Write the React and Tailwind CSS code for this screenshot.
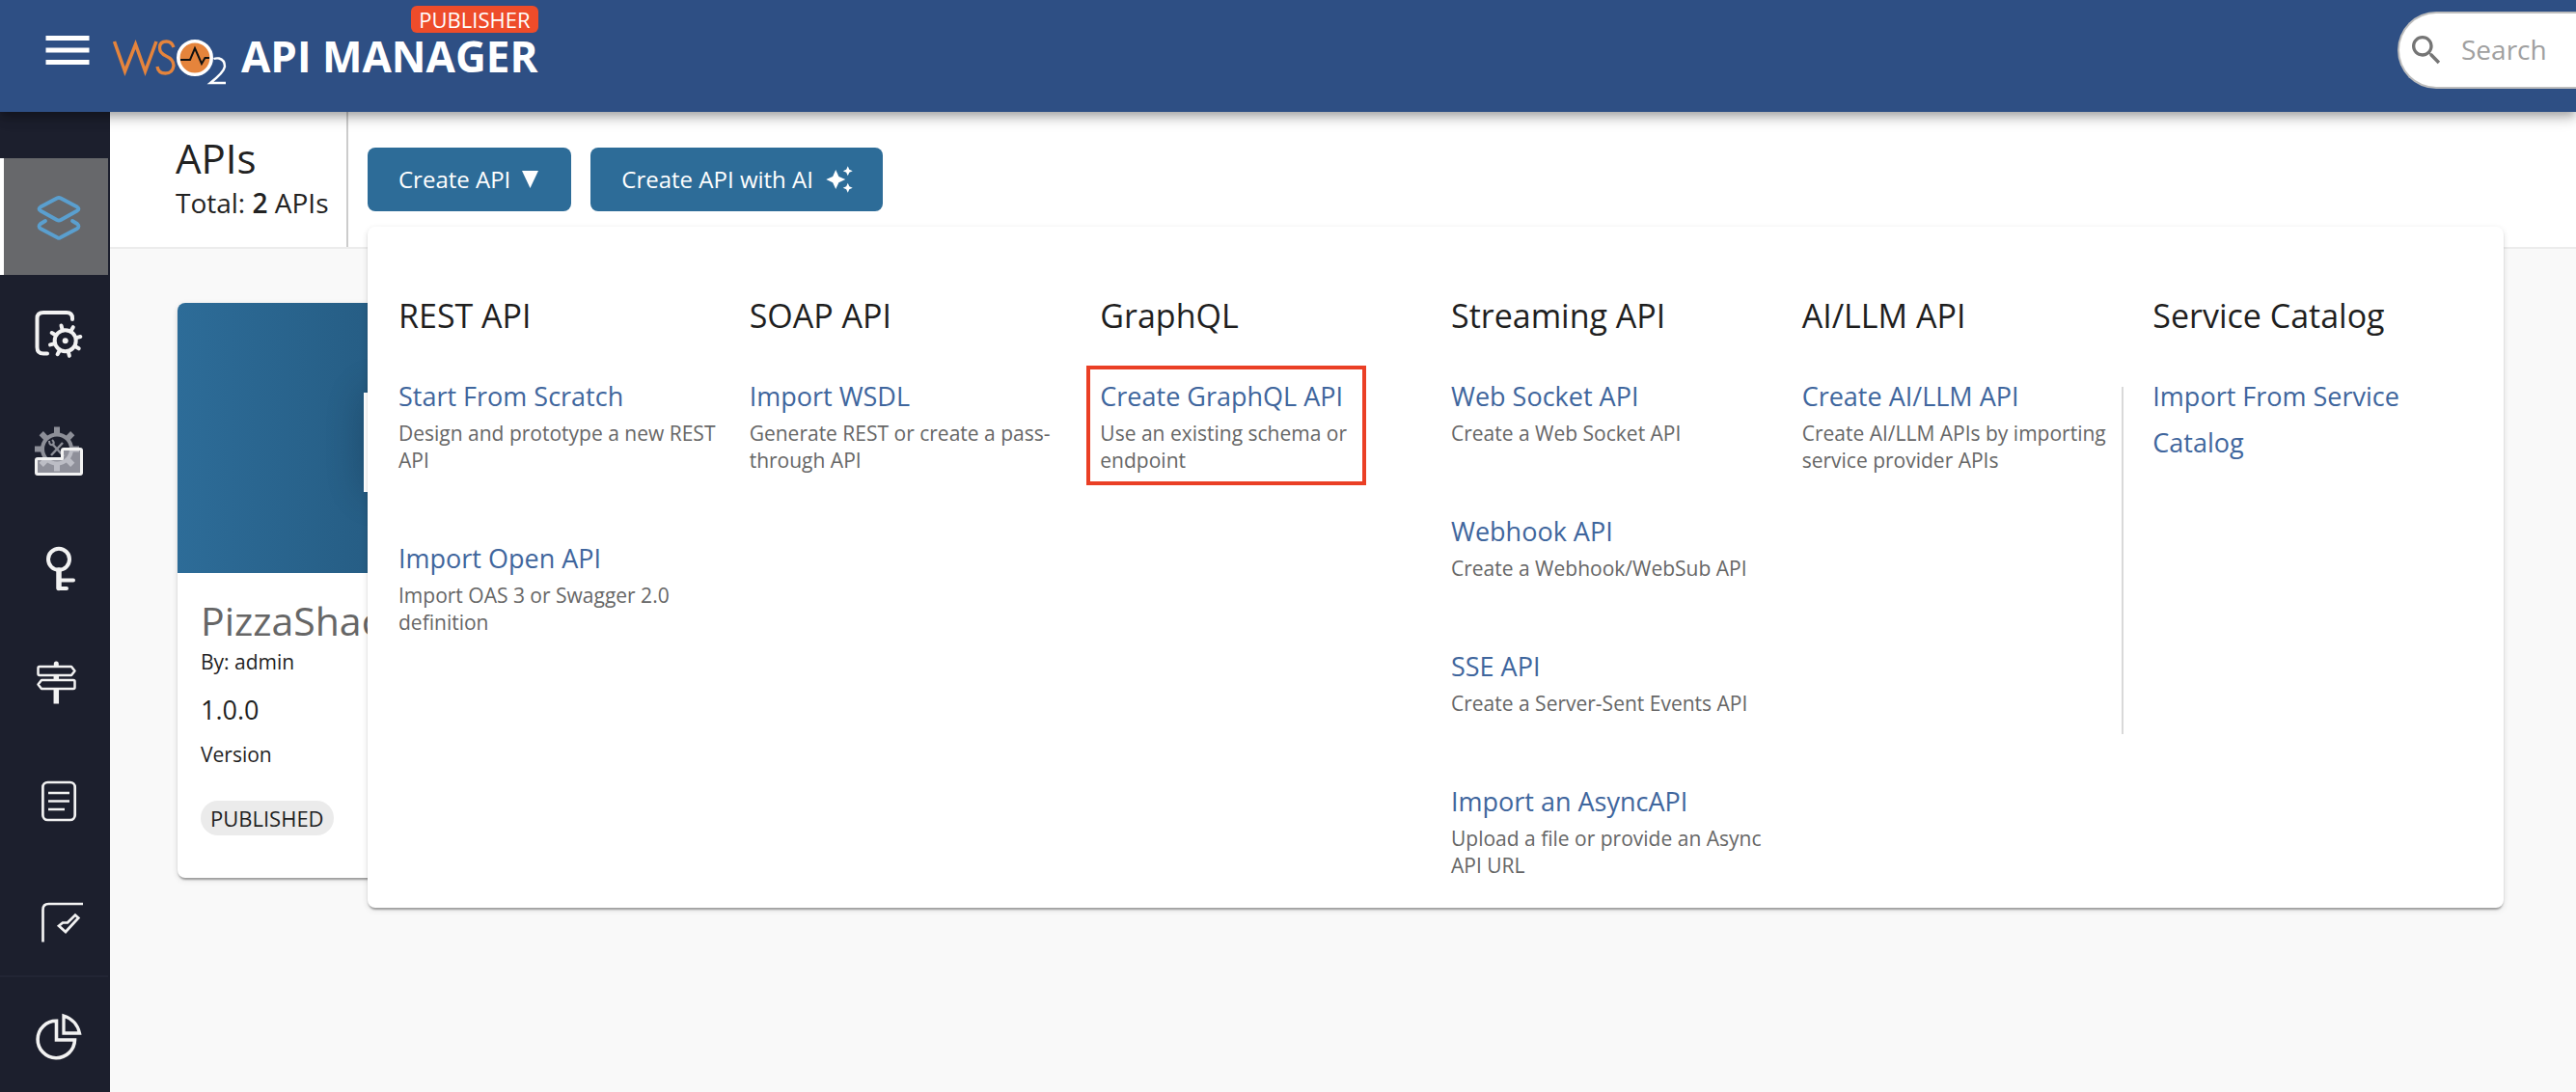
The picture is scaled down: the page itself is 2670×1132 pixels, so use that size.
import React from "react";

const columns = [
  { title: "REST API", items: [
    ["Start From Scratch", "Design and prototype a new REST API"],
    ["Import Open API", "Import OAS 3 or Swagger 2.0 definition"],
  ] },
  { title: "SOAP API", items: [["Import WSDL", "Generate REST or create a pass-through API"]] },
  { title: "GraphQL", items: [["Create GraphQL API", "Use an existing schema or endpoint", true]] },
  { title: "Streaming API", items: [
    ["Web Socket API", "Create a Web Socket API"],
    ["Webhook API", "Create a Webhook/WebSub API"],
    ["SSE API", "Create a Server-Sent Events API"],
    ["Import an AsyncAPI", "Upload a file or provide an Async API URL"],
  ] },
  { title: "AI/LLM API", items: [["Create AI/LLM API", "Create AI/LLM APIs by importing service provider APIs"]] },
  { title: "Service Catalog", divided: true, items: [["Import From Service Catalog", ""]] },
];

const Icon = ({ children }) => (
  <svg viewBox="0 0 56 56" className="h-14 w-14" fill="none" stroke="#f2f2f2" strokeWidth="4" aria-hidden="true">{children}</svg>
);

const gearTeeth = [0, 45, 90, 135, 180, 225, 270, 315];

const LayersIcon = () => (
  <Icon>
    <g stroke="#5a9fcf" strokeWidth="3.8" strokeLinejoin="round" strokeLinecap="round">
      <path d="M26 8.5 L9 17.5 Q6 19.500 9 21.500 L26 31 Q28 32 30 31 L47 21.500 Q50 19.500 47 17.500 L30 8.5 Q28 7.5 26 8.5 Z" />
      <path d="M14 32 L9 35 Q6 37.5 9 40 L26 49 Q28 50.500 30 49 L47 40 Q50 37.5 47 35 L42 32" />
    </g>
  </Icon>
);

const ServicesIcon = () => (
  <Icon>
    <path d="M42 13 V12 Q42 6 36 6 H12 Q5.500 6 5.500 12 V42 Q5.500 48.500 12 48.500 H16" strokeLinecap="round" />
    <circle cx="34.700" cy="35.200" r="11" />
    <circle cx="34.700" cy="35.200" r="3" fill="#f2f2f2" stroke="none" />
    {gearTeeth.map((a) => <path key={a} d="M34.700 23.500 V19" strokeLinecap="round" transform={`rotate(${a - 15} 34.7 35.2)`} />)}
  </Icon>
);

const PoliciesIcon = () => (
  <Icon>
    <g stroke="#8d8f98">
      <circle cx="26" cy="26.500" r="15" />
      {gearTeeth.map((a) => <path key={a} d="M26 11 V3.500" strokeWidth="6" transform={`rotate(${a} 26 26.5)`} />)}
      <path d="M21 21 L33 34 M32 20 L20 33" strokeWidth="2.500" />
      <path d="M18 18 Q18 23 22 22 Q24 20 21 17" strokeWidth="2" />
    </g>
    <path d="M6 36.500 H31.500 V28 Q31.500 26.500 33 26.500 H50 Q51.500 26.500 51.500 28 V51 Q51.500 52.500 50 52.500 H6 Q4.500 52.500 4.500 51 V38 Q4.500 36.500 6 36.500 Z" fill="#dcdce2" fillOpacity="0.600" strokeWidth="3" strokeLinejoin="round" />
  </Icon>
);

const KeyIcon = () => (
  <Icon>
    <circle cx="28" cy="19.800" r="11" />
    <path d="M28 31 V49.500" strokeWidth="5.500" strokeLinecap="round" />
    <path d="M28 41.500 H43 M28 50 H36" strokeLinecap="round" />
  </Icon>
);

const SignIcon = () => (
  <Icon>
    <path d="M25.300 7 V8.500" strokeWidth="5" strokeLinecap="round" />
    <path d="M25.300 19 V24 M25.300 33 V48.500" strokeWidth="5.500" />
    <path d="M8 10 H41 L44.500 14.500 L41 19 H8 Q6.500 19 6.500 17.500 V11.500 Q6.500 10 8 10 Z M43 24 H10 L6.500 28.500 L10 33 H43 Q44.500 33 44.500 31.500 V25.500 Q44.500 24 43 24 Z" strokeWidth="2.500" strokeLinejoin="round" />
  </Icon>
);

const DocIcon = () => (
  <Icon>
    <rect x="11.400" y="9" width="33.300" height="39" rx="5" strokeWidth="2.700" />
    <path d="M17 20 H39 M17 28.500 H39 M17 37 H34" strokeWidth="2.700" />
  </Icon>
);

const CheckIcon = () => (
  <Icon>
    <path d="M11.500 53.500 V20 Q11.500 14 17.500 14 H53" strokeWidth="2.700" />
    <path d="M28 36.800 L32 33.500 H37 L45 25.500 L48.300 28.500 L35 43 Z" strokeWidth="2.700" />
  </Icon>
);

const PieIcon = () => (
  <Icon>
    <path d="M25.500 13.300 A19.200 19.200 0 1 0 44.500 33 H25.500 Z" strokeWidth="3.600" />
    <path d="M33 8 V26 H49.500 Q46.500 12.500 33 8 Z" strokeWidth="3.300" />
  </Icon>
);

const navItems = [
  ["APIs", LayersIcon], ["Services", ServicesIcon], ["Policies", PoliciesIcon], ["Scopes", KeyIcon],
  ["Routing", SignIcon], ["Documents", DocIcon], ["Governance", CheckIcon], ["Analytics", PieIcon],
];

function Header() {
  return (
    <header className="relative z-20 flex h-[116px] items-start justify-between bg-[#2e4f84] shadow-[0_4px_8px_-2px_rgba(0,0,0,0.2),0_8px_10px_rgba(0,0,0,0.14),0_2px_20px_rgba(0,0,0,0.12)]">
      <div className="flex">
        <button type="button" aria-label="Open menu" className="mt-[22px] ml-10 h-[60px] w-[60px]">
          <svg viewBox="0 0 24 24" fill="#fff"><path d="M3 18h18v-2H3v2zm0-5h18v-2H3v2zm0-7v2h18V6H3z" /></svg>
        </button>
        <a href="#home" className="ml-4 flex pt-[6px]" aria-label="WSO2 API Manager Publisher">
          <svg viewBox="0 0 120 52" className="mt-8 h-[52px] w-[120px]" fill="none">
            <path d="M2.500 5 L13.500 36 L24.500 8 L34.500 36 L46 5" stroke="#e5843c" strokeWidth="3.500" />
            <path d="M64 11 Q62 5 56.500 5 Q49.500 5 49.500 11.500 Q49.500 17 56 20 Q64 23.500 64 30 Q63 38 55.500 38 Q48 38 47 31" stroke="#e5843c" strokeWidth="3.300" />
            <circle cx="86" cy="22" r="17.200" fill="#e5843c" stroke="#fff" strokeWidth="3.600" />
            <path d="M71 24 H81 L86 12 L93 28 L96.500 22 H101" stroke="#111" strokeWidth="2" />
            <path d="M105.500 23 Q108 22 111 22.500 Q117 24 117 31 Q116 37 102 48 H118" stroke="#fff" strokeWidth="2.400" />
          </svg>
          <span className="ml-[14px] flex flex-col items-end">
            <span className="rounded-md bg-[#ee4c2a] px-2 text-[22px] leading-7 text-white">PUBLISHER</span>
            <span className="text-[44px] leading-[48px] font-bold text-white">API MANAGER</span>
          </span>
        </a>
      </div>
      <label className="mt-3 flex h-20 w-[185px] items-center overflow-hidden rounded-l-full border-2 border-r-0 border-[#bdbdbd] bg-white">
        <svg viewBox="0 0 24 24" className="ml-2 h-10 w-10 shrink-0" fill="#757575" aria-hidden="true"><path d="M15.500 14h-.79l-.28-.27C15.410 12.590 16 11.110 16 9.500 16 5.910 13.090 3 9.500 3S3 5.910 3 9.500 5.910 16 9.500 16c1.610 0 3.090-.59 4.230-1.570l.27.28v.79l5 4.990L20.490 19l-4.990-5zm-6 0C7.010 14 5 11.990 5 9.500S7.010 5 9.500 5 14 7.010 14 9.500 11.990 14 9.500 14z" /></svg>
        <input aria-label="Search" placeholder="Search" className="ml-4 min-w-0 flex-1 pb-[2px] text-[28px] outline-none placeholder:text-[#a0a0a0]" />
      </label>
    </header>
  );
}

function Sidebar() {
  return (
    <nav className="flex w-[114px] shrink-0 flex-col bg-[#1c1f2d] pt-12">
      {navItems.map(([label, Glyph], i) => (
        <a key={label} href={"#" + label.toLowerCase()} aria-label={label}
          className={i === 0
            ? "mr-[2px] flex h-[121px] items-center border-l-4 border-white bg-[#67686b] pl-[29px]"
            : i === 7
              ? "mr-[2px] flex h-[121px] items-center border-t-2 border-[#222534] pl-[33px]"
              : "mr-[2px] flex h-[121px] items-center pl-[33px]"}>
          <Glyph />
        </a>
      ))}
    </nav>
  );
}

function ApiCard() {
  return (
    <article className="w-[432px] overflow-hidden rounded-lg bg-white shadow-[0_4px_2px_-2px_rgba(0,0,0,0.2),0_2px_2px_rgba(0,0,0,0.14),0_2px_6px_rgba(0,0,0,0.12)]">
      <div className="flex h-[280px] items-center justify-center bg-linear-to-r from-[#2d6c98] to-[#1e4d6f] pt-2">
        <div className="h-[103px] w-[46px] bg-white shadow-[0_0_40px_rgba(0,0,0,0.2)]" />
      </div>
      <div className="px-6 pb-11 text-[#1f1f1f]">
        <h2 className="truncate pt-5 text-[41px] leading-[58px] text-[#666]">PizzaShackAPI</h2>
        <p className="text-[21px] leading-7">By: admin</p>
        <p className="mt-4 text-[27px] leading-10">1.0.0</p>
        <p className="mt-3 text-[21px] leading-7">Version</p>
        <span className="mt-[34px] inline-block rounded-full bg-[#ebebeb] px-[10px] text-[22px] leading-9">PUBLISHED</span>
      </div>
    </article>
  );
}

function CreateMenu() {
  return (
    <section aria-label="Create API" className="absolute top-[119px] right-[75px] left-[267px] z-10 grid grid-cols-6 rounded-lg bg-white pt-16 pb-[30px] pl-8 shadow-[0_4px_2px_-2px_rgba(0,0,0,0.2),0_2px_2px_rgba(0,0,0,0.14),0_2px_6px_rgba(0,0,0,0.12)]">
      {columns.map(({ title, items, divided }) => (
        <div key={title}>
          <h3 className="text-[34px] leading-[56px] text-[#1f1f1f]">{title}</h3>
          <div className={divided ? "mt-[46px] -ml-8 flex h-[360px] flex-col border-l-2 border-[#d9d9d9] pl-[30px]" : "mt-[46px] flex flex-col"}>
            <ul className="-mt-[14px] flex flex-col gap-16">
              {items.map(([name, text, marked]) => (
                <li key={name} className="relative pr-8">
                  {marked && <span className="pointer-events-none absolute -top-2 -bottom-3 -left-[14px] w-[290px] border-4 border-[#ea3f25]" />}
                  <a href="#create" className="block text-[27px] leading-[48px] text-[#3f669d]">{name}</a>
                  {text && <p className="text-[21px] leading-7 text-[#666]">{text}</p>}
                </li>
              ))}
            </ul>
          </div>
        </div>
      ))}
    </section>
  );
}

export default function App() {
  return (
    <div className="flex min-h-screen flex-col overflow-x-hidden bg-[#f9f9f9] font-['Open_Sans',sans-serif]">
      <Header />
      <div className="flex flex-1">
        <Sidebar />
        <main className="relative min-w-0 flex-1">
          <div className="flex h-[142px] border-b-2 border-[#ececec] bg-white">
            <div className="w-[247px] shrink-0 border-r-2 border-[#ccc] pt-5 pl-[68px] text-[#222]">
              <h1 className="text-[42px] leading-[56px]">APIs</h1>
              <p className="text-[28px] leading-9">Total: <b className="font-semibold">2</b> APIs</p>
            </div>
            <div className="flex gap-5 pt-[37px] pl-5">
              <button type="button" className="flex h-[66px] items-center gap-3 rounded-lg bg-[#2d6c98] pr-[34px] pl-8 text-[24px] text-white">
                Create API
                <svg viewBox="0 0 17 18" className="h-[18px] w-[17px]" fill="#fff" aria-hidden="true"><path d="M0 0H17L8.500 18Z" /></svg>
              </button>
              <button type="button" className="flex h-[66px] items-center gap-3 rounded-lg bg-[#2d6c98] pr-[30px] pl-8 text-[24px] text-white">
                Create API with AI
                <svg viewBox="0 0 24 24" className="h-[30px] w-[30px]" fill="#fff" aria-hidden="true"><path d="m19 9 1.250-2.750L23 5l-2.750-1.250L19 1l-1.250 2.750L15 5l2.750 1.250L19 9zm-7.500.5L9 4 6.500 9.500 1 12l5.500 2.500L9 20l2.500-5.500L17 12l-5.500-2.500zM19 15l-1.250 2.750L15 19l2.750 1.250L19 23l1.250-2.750L23 19l-2.750-1.250L19 15z" /></svg>
              </button>
            </div>
          </div>
          <div className="pt-14 pl-[70px]"><ApiCard /></div>
          <CreateMenu />
        </main>
      </div>
    </div>
  );
}
